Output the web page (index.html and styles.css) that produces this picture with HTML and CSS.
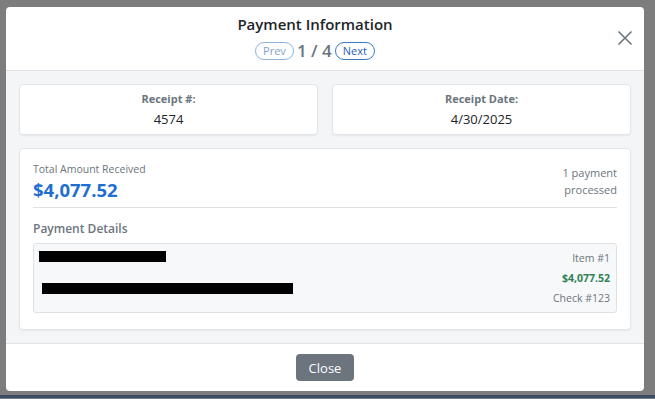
FILE: index.html
```html
<!DOCTYPE html>
<html lang="en">
<head>
  <meta charset="UTF-8">
  <meta name="viewport" content="width=device-width, initial-scale=1.0">
  <title>Payment Information</title>
  <link rel="stylesheet" href="styles.css">
</head>
<body>
  <div class="modal">
    <div class="modal-header">
      <h2 class="modal-title">Payment Information</h2>
      <div class="pager">
        <button class="pill pill-faded">Prev</button>
        <span class="pager-count">1 / 4</span>
        <button class="pill">Next</button>
      </div>
      <button class="close-x" aria-label="Close">
        <svg width="16" height="16" viewBox="0 0 16 16">
          <path d="M1.5 1.5 L14.5 14.5 M14.5 1.5 L1.5 14.5" stroke="#6c757d" stroke-width="1.6" fill="none"/>
        </svg>
      </button>
    </div>

    <div class="modal-body">
      <div class="info-row">
        <div class="info-card">
          <div class="info-label">Receipt #:</div>
          <div class="info-value">4574</div>
        </div>
        <div class="info-card">
          <div class="info-label">Receipt Date:</div>
          <div class="info-value">4/30/2025</div>
        </div>
      </div>

      <div class="summary-card">
        <div class="summary-top">
          <div>
            <div class="muted-small">Total Amount Received</div>
            <div class="total">$4,077.52</div>
          </div>
          <div class="summary-count">1 payment<br>processed</div>
        </div>
        <div class="section-title">Payment Details</div>
        <div class="detail-box">
          <div class="detail-left">
            <div class="redact redact-1"></div>
            <div class="redact redact-2"></div>
          </div>
          <div class="detail-right">
            <div>Item #1</div>
            <div class="amount">$4,077.52</div>
            <div>Check #123</div>
          </div>
        </div>
      </div>
    </div>

    <div class="modal-footer">
      <button class="btn-close">Close</button>
    </div>
  </div>
  <div class="taskbar"></div>
</body>
</html>
```

FILE: styles.css
```css
* {
  box-sizing: border-box;
}

body {
  margin: 0;
  background-color: #7d7d7d;
  font-family: "Open Sans", "Noto Sans", sans-serif;
  color: #212529;
  height: 399px;
  overflow: hidden;
}

.modal {
  position: relative;
  width: 638px;
  margin: 7px 0 0 6px;
  background-color: #fff;
  border-radius: 4px;
  overflow: hidden;
}

.modal-header {
  position: relative;
  text-align: center;
  padding: 5px 36px 9px 16px;
  border-bottom: 1px solid #dee2e6;
}

.modal-title {
  margin: 0;
  font-size: 15px;
  font-weight: 600;
  line-height: 24px;
  color: #212529;
}

.pager {
  margin-top: 5px;
  height: 20px;
  display: flex;
  justify-content: center;
  align-items: center;
  gap: 3px;
}

.pill {
  font-family: inherit;
  font-size: 11px;
  line-height: 16px;
  padding: 0 7px;
  background: #fff;
  border: 1px solid #3a7bc8;
  color: #1f62b0;
  border-radius: 10px;
  cursor: pointer;
}

.pill-faded {
  border-color: #8fb3dd;
  color: #7f9fc8;
}

.pager-count {
  font-size: 17px;
  font-weight: 600;
  color: #6c757d;
  line-height: 20px;
}

.close-x {
  position: absolute;
  right: 11px;
  top: 23px;
  padding: 0;
  border: none;
  background: none;
  cursor: pointer;
}

.modal-body {
  background-color: #f4f5f7;
  padding: 13px 13px 13px;
}

.info-row {
  display: grid;
  grid-template-columns: 1fr 1fr;
  gap: 14px;
}

.info-card {
  background: #fff;
  border: 1px solid #e2e5e9;
  border-radius: 4px;
  box-shadow: 0 1px 2px rgba(0, 0, 0, 0.06);
  text-align: center;
  padding: 6px 0 5px;
}

.info-label {
  font-size: 11px;
  font-weight: 700;
  color: #6c757d;
  line-height: 16px;
}

.info-value {
  font-size: 13px;
  line-height: 20px;
  margin-top: 2px;
}

.summary-card {
  margin-top: 13px;
  background: #fff;
  border: 1px solid #e2e5e9;
  border-radius: 4px;
  box-shadow: 0 1px 2px rgba(0, 0, 0, 0.06);
  padding: 12px 13px 16px;
}

.summary-top {
  display: flex;
  justify-content: space-between;
  border-bottom: 1px solid #dee2e6;
  padding-bottom: 4px;
}

.muted-small {
  font-size: 10.5px;
  line-height: 16px;
  color: #6c757d;
}

.total {
  font-size: 18.5px;
  font-weight: 700;
  line-height: 26px;
  color: #1f6fd0;
}

.summary-count {
  font-size: 11px;
  line-height: 17px;
  color: #6c757d;
  text-align: right;
  margin-top: 3px;
}

.section-title {
  margin-top: 12px;
  font-size: 12px;
  font-weight: 600;
  line-height: 18px;
  color: #6c757d;
}

.detail-box {
  margin-top: 5px;
  display: flex;
  justify-content: space-between;
  background: #f7f8f9;
  border: 1px solid #dfe2e5;
  border-radius: 3px;
  padding: 4px 6px 4px 5px;
}

.redact {
  background: #000;
  height: 11px;
}

.redact-1 {
  width: 127px;
  margin-top: 3px;
}

.redact-2 {
  width: 251px;
  margin: 21px 0 0 3px;
}

.detail-right {
  text-align: right;
  font-size: 10.5px;
  line-height: 20px;
  color: #6c757d;
}

.amount {
  font-weight: 700;
  color: #2e8257;
}

.modal-footer {
  border-top: 1px solid #dee2e6;
  padding: 10px 0;
  text-align: center;
}

.btn-close {
  font-family: inherit;
  font-size: 13px;
  color: #fff;
  background-color: #6c757d;
  border: none;
  border-radius: 4px;
  width: 58px;
  height: 27px;
  cursor: pointer;
}

.taskbar {
  margin-top: 4px;
  height: 3px;
  background-color: #3d4c66;
}
```
